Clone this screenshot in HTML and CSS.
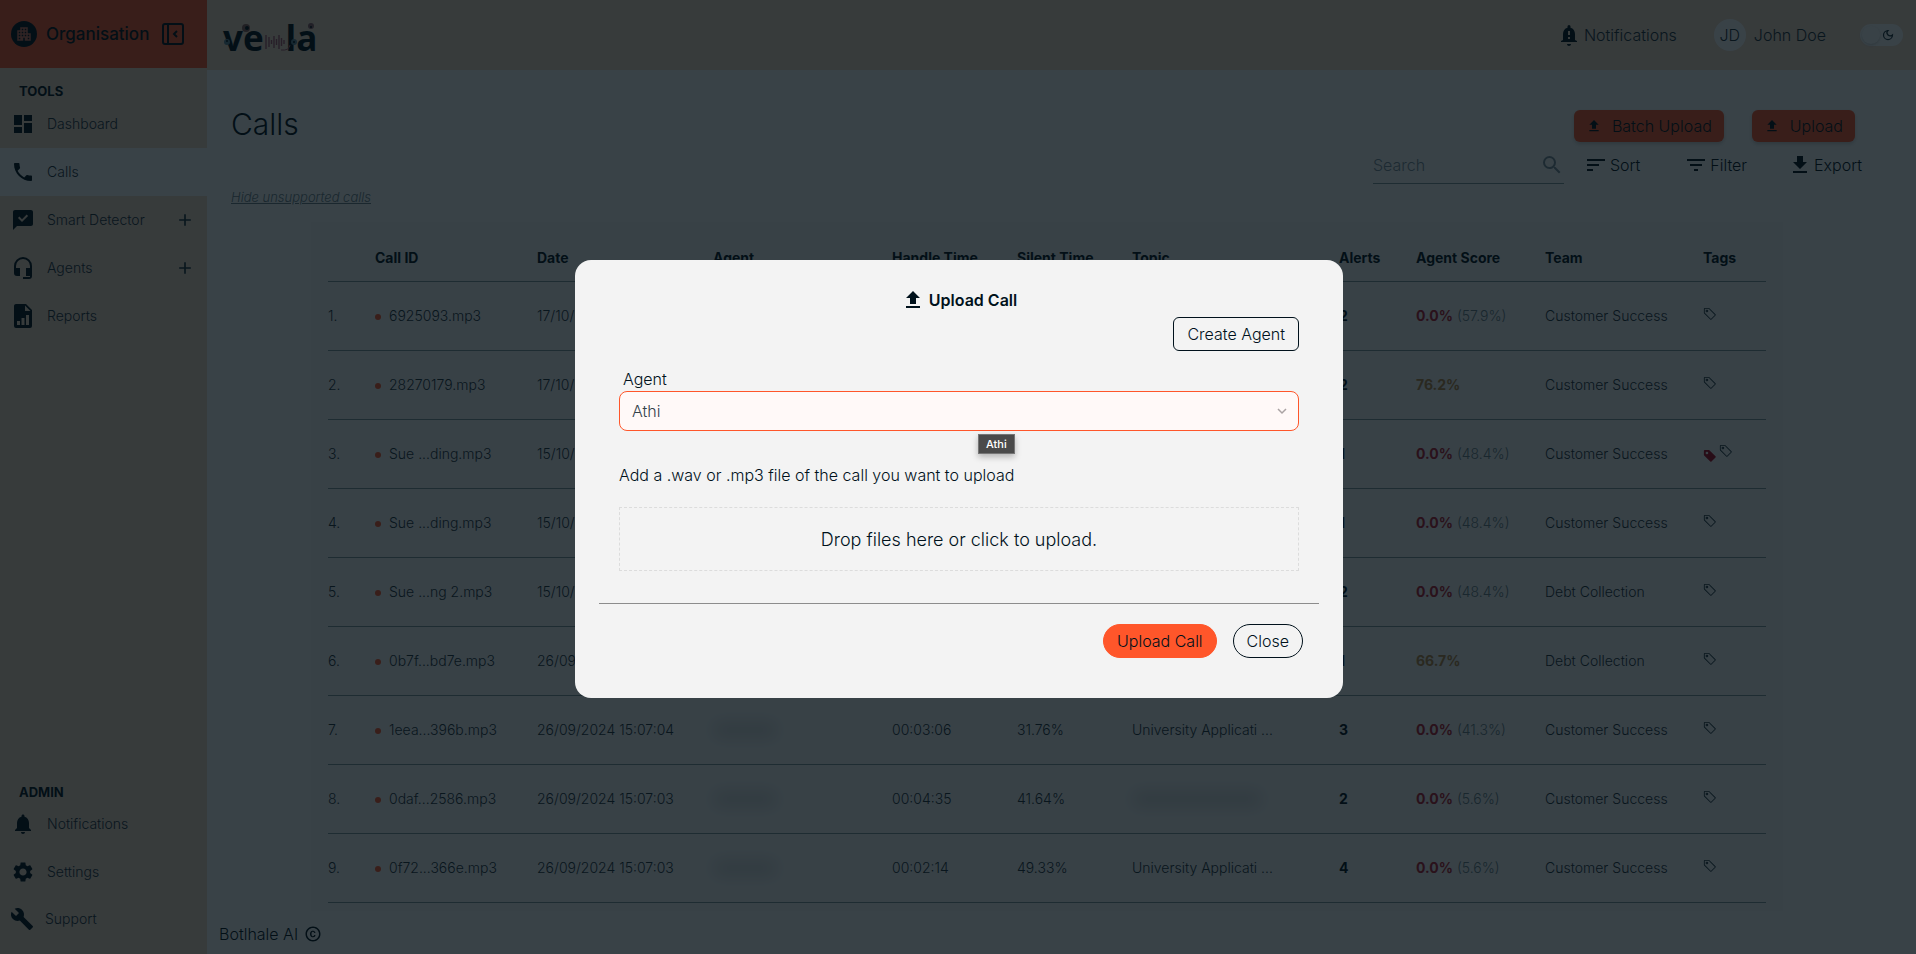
FILE: index.html
```html
<!DOCTYPE html>
<html lang="en">
<head>
<meta charset="utf-8">
<meta name="viewport" content="width=device-width, initial-scale=1">
<title>Vela - Calls</title>
<link rel="stylesheet" href="styles.css">
</head>
<body>
<svg class="sprite" aria-hidden="true">
  <symbol id="i-upload" viewBox="0 0 24 24"><path d="M9 16h6v-6h4l-7-7-7 7h4zM5 18h14v2H5z"/></symbol>
  <symbol id="i-download" viewBox="0 0 24 24"><path d="M19 9h-4V3H9v6H5l7 7 7-7zM5 18v2h14v-2H5z"/></symbol>
  <symbol id="i-tag" viewBox="0 0 16 16"><path d="M6 4.500a1.500 1.500 0 1 1-3 0 1.500 1.500 0 0 1 3 0m-1 0a.5.5 0 1 0-1 0 .5.5 0 0 0 1 0"/><path d="M2 1h4.586a1 1 0 0 1 .707.293l7 7a1 1 0 0 1 0 1.414l-4.586 4.586a1 1 0 0 1-1.414 0l-7-7A1 1 0 0 1 1 6.586V2a1 1 0 0 1 1-1m0 5.586 7 7L13.586 9l-7-7H2z"/></symbol>
  <symbol id="i-tag-fill" viewBox="0 0 16 16"><path d="M2 1a1 1 0 0 0-1 1v4.586a1 1 0 0 0 .293.707l7 7a1 1 0 0 0 1.414 0l4.586-4.586a1 1 0 0 0 0-1.414l-7-7A1 1 0 0 0 6.586 1zm4 3.500a1.500 1.500 0 1 1-3 0 1.500 1.500 0 0 1 3 0"/></symbol>
  <symbol id="i-plus" viewBox="0 0 24 24"><path d="M19 13h-6v6h-2v-6H5v-2h6V5h2v6h6z"/></symbol>
</svg>

<div class="app">
  <aside class="sidebar">
    <div class="org">
      <span class="org-badge"><svg viewBox="0 0 24 24"><path d="M17 11V3H7v4H3v14h8v-4h2v4h8V11h-4zM7 19H5v-2h2v2zm0-4H5v-2h2v2zm0-4H5V9h2v2zm4 4H9v-2h2v2zm0-4H9V9h2v2zm0-4H9V5h2v2zm4 8h-2v-2h2v2zm0-4h-2V9h2v2zm0-4h-2V5h2v2zm4 12h-2v-2h2v2zm0-4h-2v-2h2v2z"/></svg></span>
      <span class="org-name">Organisation</span>
      <button class="collapse" aria-label="Collapse sidebar"><svg viewBox="0 0 22 22" fill="none" stroke="currentColor" stroke-width="2"><rect x="1" y="1" width="20" height="20" rx="2"/><path d="M6 1v20M15 8l-3 3 3 3"/></svg></button>
    </div>
    <h2 class="group">TOOLS</h2>
    <nav class="nav">
      <a class="nav-item" href="#"><svg class="ico" viewBox="0 0 24 24"><path d="M3 13h8V3H3v10zm0 8h8v-6H3v6zm10 0h8V11h-8v10zm0-18v6h8V3h-8z"/></svg><span>Dashboard</span></a>
      <a class="nav-item active" href="#"><svg class="ico" viewBox="0 0 24 24"><path d="M6.620 10.790c1.440 2.830 3.760 5.140 6.590 6.590l2.200-2.200c.27-.27.67-.36 1.020-.24 1.120.37 2.330.57 3.570.57.55 0 1 .45 1 1V20c0 .55-.45 1-1 1-9.390 0-17-7.610-17-17 0-.55.45-1 1-1h3.500c.55 0 1 .45 1 1 0 1.250.2 2.450.57 3.570.11.35.03.74-.25 1.020l-2.200 2.200z"/></svg><span>Calls</span></a>
      <a class="nav-item" href="#"><svg class="ico" viewBox="0 0 24 24"><path d="M20 2H4c-1.100 0-2 .9-2 2v18l4-4h14c1.100 0 2-.9 2-2V4c0-1.100-.9-2-2-2zm-9 12-4-4 1.400-1.400L11 11.200l4.700-4.700 1.400 1.400z"/></svg><span>Smart Detector</span><svg class="plus"><use href="#i-plus"/></svg></a>
      <a class="nav-item" href="#"><svg class="ico" viewBox="0 0 24 24"><path d="M12 1a9 9 0 0 0-9 9v7a3 3 0 0 0 3 3h3v-8H5v-2a7 7 0 0 1 14 0v2h-4v8h4v1h-7v2h6a3 3 0 0 0 3-3V10a9 9 0 0 0-9-9z"/></svg><span>Agents</span><svg class="plus"><use href="#i-plus"/></svg></a>
      <a class="nav-item" href="#"><svg class="ico" viewBox="0 0 24 24"><path fill-rule="evenodd" d="M5 0h10l6 6v16a2 2 0 0 1-2 2H5a2 2 0 0 1-2-2V2c0-1.100.9-2 2-2zm9 1.500V7h5.500zM6 17v4h3v-4zm4.500-3v7h3v-7zM15 11v10h3V11z"/></svg><span>Reports</span></a>
    </nav>
    <h2 class="group group-admin">ADMIN</h2>
    <nav class="nav">
      <a class="nav-item" href="#"><svg class="ico" viewBox="0 0 24 24"><path d="M12 22c1.100 0 2-.9 2-2h-4c0 1.100.89 2 2 2zm6-6v-5c0-3.070-1.640-5.640-4.500-6.320V4c0-.83-.67-1.500-1.500-1.500s-1.500.67-1.500 1.500v.68C7.630 5.360 6 7.920 6 11v5l-2 2v1h16v-1l-2-2z"/></svg><span>Notifications</span></a>
      <a class="nav-item" href="#"><svg class="ico" viewBox="0 0 24 24"><path d="M19.140 12.940c.04-.3.06-.61.06-.94 0-.32-.02-.64-.07-.94l2.030-1.580c.18-.14.23-.41.12-.61l-1.920-3.320c-.12-.22-.37-.29-.59-.22l-2.390.96c-.5-.38-1.030-.7-1.620-.94l-.36-2.540c-.04-.24-.24-.41-.48-.41h-3.840c-.24 0-.43.17-.47.41l-.36 2.540c-.59.24-1.130.57-1.620.94l-2.390-.96c-.22-.08-.47 0-.59.22L2.740 8.870c-.12.21-.08.47.12.61l2.030 1.580c-.05.3-.09.63-.09.94s.02.64.07.94l-2.030 1.580c-.18.14-.23.41-.12.61l1.920 3.320c.12.22.37.29.59.22l2.390-.96c.5.38 1.030.7 1.620.94l.36 2.540c.05.24.24.41.48.41h3.840c.24 0 .44-.17.47-.41l.36-2.540c.59-.24 1.130-.56 1.620-.94l2.390.96c.22.08.47 0 .59-.22l1.920-3.320c.12-.22.07-.47-.12-.61l-2.010-1.580zM12 15.600c-1.980 0-3.600-1.620-3.600-3.600s1.620-3.600 3.600-3.600 3.600 1.620 3.600 3.600-1.620 3.600-3.600 3.600z"/></svg><span>Settings</span></a>
      <a class="nav-item support" href="#"><svg class="ico" viewBox="0 0 24 24"><path d="m22.700 19-9.100-9.100c.9-2.300.4-5-1.500-6.900-2-2-5-2.400-7.400-1.300L9 6 6 9 1.600 4.700C.4 7.100.9 10.100 2.900 12.100c1.900 1.900 4.600 2.400 6.900 1.500l9.100 9.100c.4.400 1 .4 1.400 0l2.300-2.300c.5-.4.5-1.100.1-1.400z"/></svg><span>Support</span></a>
    </nav>
  </aside>

  <div class="page">
    <header class="topbar">
      <div class="logo" aria-label="vela">
        <span>ve</span>
        <svg class="wave" viewBox="0 0 20 24" stroke="#a8586c" stroke-width="1.400"><path d="M1 5v14M4 7v10M6.500 10v4M9 6v12M11.500 9v6M14 5v14M16.500 8v8M19 10v4"/></svg>
        <span>la</span>
        <svg class="logo-art" viewBox="0 0 96 34"><circle cx="23" cy="10" r="4" fill="#90605a"/><circle cx="24" cy="10" r="2" fill="#00111b"/><circle cx="4" cy="24" r="3" fill="#5d8398"/><circle cx="4" cy="23" r="1" fill="#00111b"/><circle cx="71" cy="24" r="3" fill="#5d8398"/><circle cx="71" cy="24" r="1" fill="#00111b"/><circle cx="88" cy="8" r="3" fill="#90606a"/><circle cx="88" cy="9" r="1" fill="#00111b"/><path d="M58 32q8 1 9-5" stroke="#a8586c" fill="none"/></svg>
      </div>
      <div class="top-actions">
        <a class="notif" href="#"><svg viewBox="0 0 24 24"><path fill-rule="evenodd" d="M12 23c1.100 0 2-.9 2-2h-4c0 1.100.9 2 2 2zm6-6v-6c0-3.070-1.630-5.640-4.500-6.320V3.500a1.500 1.500 0 0 0-3 0v1.180C7.640 5.360 6 7.920 6 11v6l-2 1v1h16v-1zm-5-1h-2v-2h2zm0-4h-2V8h2z"/></svg>Notifications</a>
        <div class="user"><span class="avatar">JD</span>John Doe</div>
        <button class="theme" aria-label="Dark mode"><span class="knob"></span><svg viewBox="0 0 24 24" fill="none" stroke="currentColor" stroke-width="2.500"><path d="M12 3a6 6 0 0 0 9 9 9 9 0 1 1-9-9z"/></svg></button>
      </div>
    </header>

    <main class="main">
      <div class="head">
        <h1>Calls</h1>
        <div class="head-btns">
          <button class="primary"><svg><use href="#i-upload"/></svg>Batch Upload</button>
          <button class="primary"><svg><use href="#i-upload"/></svg>Upload</button>
        </div>
      </div>
      <div class="tools">
        <label class="search"><input type="text" placeholder="Search" aria-label="Search"><svg viewBox="0 0 24 24"><path d="M15.500 14h-.79l-.28-.27A6.471 6.471 0 0 0 16 9.500 6.500 6.500 0 1 0 9.500 16c1.610 0 3.090-.59 4.230-1.570l.27.28v.79l5 4.990L20.490 19l-4.990-5zm-6 0C7.010 14 5 11.990 5 9.500S7.010 5 9.500 5 14 7.010 14 9.500 11.990 14 9.500 14z"/></svg></label>
        <button class="tool sort"><svg viewBox="0 0 24 24"><path d="M3 18h6v-2H3v2zM3 6v2h18V6H3zm0 7h12v-2H3v2z"/></svg>Sort</button>
        <button class="tool filter"><svg viewBox="0 0 24 24"><path d="M10 18h4v-2h-4v2zM3 6v2h18V6H3zm3 7h12v-2H6v2z"/></svg>Filter</button>
        <button class="tool"><svg><use href="#i-download"/></svg>Export</button>
      </div>
      <a class="hide-link" href="#">Hide unsupported calls</a>

      <section class="panel">
        <table class="calls">
          <colgroup><col class="c-num"><col class="c-id"><col class="c-date"><col class="c-agent"><col class="c-handle"><col class="c-silent"><col class="c-topic"><col class="c-alerts"><col class="c-score"><col class="c-team"><col class="c-tags"></colgroup>
          <thead><tr><th></th><th>Call ID</th><th>Date</th><th>Agent</th><th>Handle Time</th><th>Silent Time</th><th>Topic</th><th>Alerts</th><th>Agent Score</th><th>Team</th><th>Tags</th></tr></thead>
          <tbody>
            <tr><td>1.</td><td><i class="dot"></i>6925093.mp3</td><td>17/10/2024</td><td></td><td></td><td></td><td></td><td><b>2</b></td><td><b class="bad">0.0%</b> <span class="sub">(57.9%)</span></td><td>Customer Success</td><td><svg class="tag"><use href="#i-tag"/></svg></td></tr>
            <tr><td>2.</td><td><i class="dot"></i>28270179.mp3</td><td>17/10/2024</td><td></td><td></td><td></td><td></td><td><b>2</b></td><td><b class="mid">76.2%</b></td><td>Customer Success</td><td><svg class="tag"><use href="#i-tag"/></svg></td></tr>
            <tr><td>3.</td><td><i class="dot"></i>Sue ...ding.mp3</td><td>15/10/2024</td><td></td><td></td><td></td><td></td><td><b>1</b></td><td><b class="bad">0.0%</b> <span class="sub">(48.4%)</span></td><td>Customer Success</td><td><svg class="tag filled"><use href="#i-tag-fill"/></svg><svg class="tag"><use href="#i-tag"/></svg></td></tr>
            <tr><td>4.</td><td><i class="dot"></i>Sue ...ding.mp3</td><td>15/10/2024</td><td></td><td></td><td></td><td></td><td><b>1</b></td><td><b class="bad">0.0%</b> <span class="sub">(48.4%)</span></td><td>Customer Success</td><td><svg class="tag"><use href="#i-tag"/></svg></td></tr>
            <tr><td>5.</td><td><i class="dot"></i>Sue ...ng 2.mp3</td><td>15/10/2024</td><td></td><td></td><td></td><td></td><td><b>2</b></td><td><b class="bad">0.0%</b> <span class="sub">(48.4%)</span></td><td>Debt Collection</td><td><svg class="tag"><use href="#i-tag"/></svg></td></tr>
            <tr><td>6.</td><td><i class="dot"></i>0b7f...bd7e.mp3</td><td>26/09/2024</td><td></td><td></td><td></td><td></td><td><b>1</b></td><td><b class="mid">66.7%</b></td><td>Debt Collection</td><td><svg class="tag"><use href="#i-tag"/></svg></td></tr>
            <tr><td>7.</td><td><i class="dot"></i>1eea...396b.mp3</td><td>26/09/2024 15:07:04</td><td><span class="redact"></span></td><td>00:03:06</td><td>31.76%</td><td>University Applicati ...</td><td><b>3</b></td><td><b class="bad">0.0%</b> <span class="sub">(41.3%)</span></td><td>Customer Success</td><td><svg class="tag"><use href="#i-tag"/></svg></td></tr>
            <tr><td>8.</td><td><i class="dot"></i>0daf...2586.mp3</td><td>26/09/2024 15:07:03</td><td><span class="redact"></span></td><td>00:04:35</td><td>41.64%</td><td><span class="redact wide"></span></td><td><b>2</b></td><td><b class="bad">0.0%</b> <span class="sub">(5.6%)</span></td><td>Customer Success</td><td><svg class="tag"><use href="#i-tag"/></svg></td></tr>
            <tr><td>9.</td><td><i class="dot"></i>0f72...366e.mp3</td><td>26/09/2024 15:07:03</td><td><span class="redact"></span></td><td>00:02:14</td><td>49.33%</td><td>University Applicati ...</td><td><b>4</b></td><td><b class="bad">0.0%</b> <span class="sub">(5.6%)</span></td><td>Customer Success</td><td><svg class="tag"><use href="#i-tag"/></svg></td></tr>
          </tbody>
        </table>
      </section>
    </main>
    <footer class="footer">Botlhale AI <svg viewBox="0 0 24 24"><path d="M10.080 10.860c.05-.33.16-.62.3-.87s.34-.46.59-.62c.24-.15.54-.22.91-.23.23.01.44.05.63.13.2.09.38.21.52.36s.25.330.34.530.13.420.14.640h1.790c-.02-.47-.11-.9-.28-1.290s-.4-.73-.7-1.010-.66-.5-1.080-.66-.88-.23-1.390-.23c-.65 0-1.220.11-1.700.34s-.88.530-1.200.920-.56.840-.71 1.360S8 11.290 8 11.870v.27c0 .58.080 1.120.23 1.640s.39.970.71 1.350.72.690 1.200.910c.48.220 1.050.340 1.700.340.47 0 .91-.08 1.320-.23s.77-.36 1.080-.63.56-.58.74-.94.29-.74.300-1.150h-1.790c-.01.21-.06.4-.15.580s-.21.330-.36.460-.32.230-.52.300c-.19.070-.39.090-.6.100-.36-.01-.66-.08-.89-.23-.25-.16-.45-.37-.59-.62s-.25-.55-.3-.88-.08-.67-.08-1v-.27c0-.35.030-.68.080-1.010zM12 2C6.480 2 2 6.480 2 12s4.480 10 10 10 10-4.480 10-10S17.520 2 12 2zm0 18c-4.410 0-8-3.590-8-8s3.590-8 8-8 8 3.590 8 8-3.590 8-8 8z"/></svg></footer>
  </div>
</div>

<div class="overlay">
  <div class="modal" role="dialog" aria-modal="true" aria-labelledby="modal-title">
    <h2 class="modal-title" id="modal-title"><svg><use href="#i-upload"/></svg>Upload Call</h2>
    <div class="modal-body">
      <button class="outline create">Create Agent</button>
      <label class="field-label" for="agent">Agent</label>
      <div class="select-wrap">
        <select id="agent"><option>Athi</option></select>
        <svg class="chev" viewBox="0 0 10 10" fill="none" stroke="#aaa3a3" stroke-width="1.500"><path d="M1 3l4 4 4-4"/></svg>
        <span class="tip" role="tooltip">Athi</span>
      </div>
      <p class="hint">Add a .wav or .mp3 file of the call you want to upload</p>
      <button class="drop">Drop files here or click to upload.</button>
    </div>
    <div class="modal-foot">
      <button class="pill fill">Upload Call</button>
      <button class="pill">Close</button>
    </div>
  </div>
</div>
</body>
</html>
```

FILE: styles.css
```css
:root {
  --ink: #00111b;
  --soft-ink: #1e313c;
  --orange: #ff562a;
  --cream: #f3dbc8;
  --line: #80989c;
}
* { box-sizing: border-box; }
body {
  margin: 0;
  font-family: Inter, "Liberation Sans", sans-serif;
  font-weight: 300;
  font-size: 14px;
  color: var(--ink);
}
svg { fill: currentColor; flex: none; }
svg[fill="none"] { fill: none; }
button, input, select { font: inherit; color: inherit; }
button { border: 0; background: none; padding: 0; cursor: pointer; }
a { color: inherit; text-decoration: none; }
h1, h2, p { margin: 0; }
.sprite { position: absolute; width: 0; height: 0; }

.app { display: flex; min-height: 100vh; background: #fff; }

/* Sidebar */
.sidebar {
  width: 207px;
  flex: none;
  display: flex;
  flex-direction: column;
  background: var(--cream);
  padding-bottom: 12px;
}
.org {
  display: flex;
  align-items: center;
  height: 68px;
  padding-left: 11px;
  background: var(--orange);
}
.org-badge {
  display: grid;
  place-items: center;
  width: 26px;
  height: 26px;
  border-radius: 50%;
  background: var(--ink);
  color: #d8705a;
}
.org-badge svg { width: 18px; height: 18px; }
.org-name { font-size: 17px; font-weight: 500; margin-left: 9px; width: 116px; }
.collapse { display: flex; }
.collapse svg { width: 22px; height: 22px; }
.group { font-size: 13px; line-height: 16px; font-weight: 700; padding: 15px 0 1px 19px; }
.group-admin { margin-top: auto; padding-top: 0; padding-bottom: 0; }
.nav { display: flex; flex-direction: column; }
.nav-item {
  display: flex;
  align-items: center;
  gap: 12px;
  height: 48px;
  padding: 0 12px 0 11px;
}
.nav-item span { color: var(--soft-ink); padding-bottom: 2px; }
.nav-item.active { background: #fff; }
.nav-item .ico { width: 24px; height: 24px; }
.nav-item .plus { width: 20px; height: 20px; margin-left: auto; color: var(--soft-ink); }
.nav-item.support { height: 46px; padding-left: 10px; gap: 11px; }

/* Top bar */
.page { flex: 1; min-width: 0; display: flex; flex-direction: column; }
.topbar {
  display: flex;
  align-items: center;
  justify-content: space-between;
  height: 70px;
  padding: 0 13px 0 16px;
  background: var(--cream);
}
.logo {
  position: relative;
  display: flex;
  align-items: center;
  margin-top: 6px;
  font: 700 35px/40px "Open Sans", sans-serif;
}
.logo .wave { width: 20px; height: 24px; margin: 8px 1px 0; }
.logo-art { position: absolute; left: 0; top: 0; width: 96px; height: 34px; }
.top-actions { display: flex; align-items: center; font-size: 16px; color: var(--soft-ink); }
.notif { display: flex; align-items: center; gap: 3px; }
.notif svg { width: 24px; height: 24px; color: var(--ink); }
.user { display: flex; align-items: center; gap: 8px; margin: 0 34px 0 37px; }
.avatar {
  display: grid;
  place-items: center;
  width: 32px;
  height: 32px;
  border-radius: 50%;
  background: #fff;
}
.theme {
  display: flex;
  align-items: center;
  justify-content: space-between;
  width: 43px;
  height: 22px;
  padding: 0 9px 0 2px;
  border-radius: 11px;
  background: #fff;
}
.knob { width: 18px; height: 18px; border-radius: 50%; background: #fff; box-shadow: 0 1px 3px #0003; }
.theme svg { width: 12px; height: 12px; }

/* Page content */
.main { padding: 36px 54px 0 24px; }
.head { display: flex; justify-content: space-between; align-items: center; height: 40px; padding-right: 7px; }
h1 { font-size: 30px; line-height: 36px; font-weight: 300; padding-bottom: 4px; }
.head-btns { display: flex; gap: 28px; }
.primary {
  display: flex;
  align-items: center;
  gap: 10px;
  height: 32px;
  padding: 0 12px;
  border-radius: 6px;
  background: var(--orange);
  font-size: 16px;
  box-shadow: 0 2px 4px #0003;
}
.primary svg { width: 16px; height: 16px; }
.tools { display: flex; justify-content: flex-end; align-items: center; height: 38px; font-size: 16px; }
.search { display: flex; align-items: center; width: 191px; height: 38px; border-bottom: 1px solid var(--line); margin-right: 20px; }
.search input { flex: 1; min-width: 0; border: 0; outline: 0; padding: 0; background: none; }
.search input::placeholder { color: #7d8f9c; opacity: 1; }
.search svg { width: 24px; height: 24px; color: #7d8f9c; }
.tool { display: flex; align-items: center; gap: 2px; }
.tool svg { width: 24px; height: 24px; }
.tool.sort { margin-right: 44px; }
.tool.filter { margin-right: 41px; }
.hide-link {
  display: inline-block;
  margin-top: 5px;
  font-size: 13px;
  line-height: 16px;
  font-style: italic;
  text-decoration: underline;
  color: #6c818a;
}
.panel { margin: 17px 79px 0 80px; padding: 8px 17px; background: #f9fafb; }
.calls { width: 100%; table-layout: fixed; border-collapse: collapse; }
.calls th, .calls td { padding: 0; text-align: left; white-space: nowrap; border-bottom: 1px solid var(--line); }
.calls th { height: 51px; padding-top: 4px; font-weight: 700; }
.calls td { height: 69px; color: var(--soft-ink); }
.calls b { font-weight: 700; color: var(--ink); }
.c-num { width: 47px; }
.c-id { width: 162px; }
.c-date { width: 176px; }
.c-agent { width: 179px; }
.c-handle { width: 125px; }
.c-silent { width: 115px; }
.c-topic { width: 207px; }
.c-alerts { width: 77px; }
.c-score { width: 129px; }
.c-team { width: 158px; }
.c-tags { width: 63px; }
.dot { display: inline-block; width: 6px; height: 6px; margin-right: 8px; border-radius: 50%; background: var(--orange); vertical-align: 1px; }
.calls .bad { color: #b81830; }
.calls .mid { color: #b88848; }
.sub { color: #6c7f88; }
.tag { width: 14px; height: 14px; vertical-align: 1px; }
.tag.filled { color: #b00820; vertical-align: -4px; margin-right: 2px; }
.redact { display: block; width: 64px; height: 16px; border-radius: 8px; background: #00111b; opacity: .12; filter: blur(8px); }
.redact.wide { width: 130px; }
.footer { display: flex; align-items: center; gap: 6px; margin-top: auto; padding: 0 12px 9px; font-size: 16px; line-height: 22px; }
.footer svg { width: 18px; height: 18px; }

/* Upload dialog */
.overlay {
  position: fixed;
  inset: 0;
  display: flex;
  align-items: center;
  justify-content: center;
  padding: 4px 0 0 2px;
  background: rgba(4, 15, 22, .79);
}
.modal {
  width: 768px;
  max-width: 100%;
  padding: 28px 24px 40px;
  border-radius: 16px;
  background: #f3f3f3;
  font-size: 16px;
}
.modal-title { display: flex; align-items: center; justify-content: center; gap: 4px; font-size: 16px; line-height: 24px; font-weight: 600; }
.modal-title svg { width: 24px; height: 24px; }
.modal-body { display: flex; flex-direction: column; padding: 5px 20px 32px; border-bottom: 1px solid #8c8c8c; }
.outline { border: 1px solid var(--ink); border-radius: 6px; height: 34px; padding: 0 13px; }
.create { align-self: flex-end; }
.field-label { margin: 16px 0 0 4px; line-height: 24px; }
.select-wrap { position: relative; }
.select-wrap select {
  display: block;
  width: 100%;
  height: 40px;
  padding: 0 12px;
  appearance: none;
  border: 1px solid var(--orange);
  border-radius: 8px;
  background: #fff9f8;
  color: #33414a;
  outline: 0;
}
.chev { position: absolute; right: 12px; top: 15px; width: 10px; height: 10px; }
.tip {
  position: absolute;
  left: 359px;
  top: 43px;
  padding: 0 7px;
  border: 1px solid #757575;
  background: #4a4a4a;
  color: #fff;
  font-size: 11px;
  line-height: 18px;
  font-weight: 500;
  box-shadow: 0 3px 6px #0004;
}
.hint { margin-top: 32px; line-height: 24px; }
.drop { height: 64px; margin-top: 20px; border: 1px dashed #dcdcdc; font-size: 18px; }
.modal-foot { display: flex; justify-content: flex-end; gap: 16px; padding: 20px 16px 0 0; }
.pill { height: 34px; padding: 0 13px; border: 1px solid var(--ink); border-radius: 17px; }
.pill.fill { border-color: var(--orange); background: var(--orange); }
```
